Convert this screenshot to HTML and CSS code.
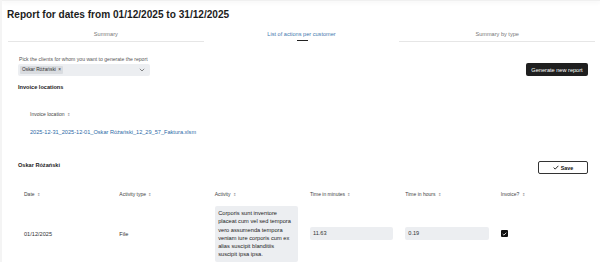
FILE: index.html
```html
<!DOCTYPE html>
<html lang="en">
<head>
    <meta charset="UTF-8">
    <title>Report</title>
    <link rel="stylesheet" href="styles.css">
</head>
<body>
<div class="top-shadow"></div>

<div class="page">
    <h1 class="page-title">Report for dates from 01/12/2025 to 31/12/2025</h1>

    <div class="tabs">
        <div class="tab">Summary</div>
        <div class="tab active">List of actions per customer</div>
        <div class="tab">Summary by type</div>
    </div>

    <div class="content">
        <div class="client-row">
            <div class="client-picker">
                <label class="field-label">Pick the clients for whom you want to generate the report</label>
                <div class="select">
                    <span class="chip">Oskar Różański <span class="chip-x">×</span></span>
                    <svg class="chevron" width="6" height="4" viewBox="0 0 6 4">
                        <path d="M0.8 0.8 L3 3 L5.2 0.8" fill="none" stroke="#555" stroke-width="0.7"/>
                    </svg>
                </div>
            </div>
            <button class="btn-dark">Generate new report</button>
        </div>

        <h2 class="section-title">Invoice locations</h2>

        <table class="invoice-table">
            <thead>
            <tr>
                <th>Invoice location <span class="sort">⇕</span></th>
            </tr>
            </thead>
            <tbody>
            <tr>
                <td><a href="#">2025-12-31_2025-12-01_Oskar Różański_12_29_57_Faktura.xlsm</a></td>
            </tr>
            </tbody>
        </table>

        <div class="customer-head">
            <h2 class="section-title">Oskar Różański</h2>
            <button class="btn-outline">
                <svg width="6" height="5" viewBox="0 0 6 5">
                    <path d="M0.6 2.6 L2.2 4.1 L5.4 0.8" fill="none" stroke="#111" stroke-width="0.9"/>
                </svg>
                Save
            </button>
        </div>

        <table class="actions-table">
            <thead>
            <tr>
                <th>Date <span class="sort">⇕</span></th>
                <th>Activity type <span class="sort">⇕</span></th>
                <th>Activity <span class="sort">⇕</span></th>
                <th>Time in minutes <span class="sort">⇕</span></th>
                <th>Time in hours <span class="sort">⇕</span></th>
                <th>Invoice? <span class="sort">⇕</span></th>
            </tr>
            </thead>
            <tbody>
            <tr>
                <td>01/12/2025</td>
                <td>File</td>
                <td>
                    <div class="activity-text">Corporis sunt inventore<br>placeat cum vel sed tempora<br>vero assumenda tempora<br>veniam iure corporis cum ex<br>alias suscipit blanditiis<br>suscipit ipsa ipsa.</div>
                </td>
                <td><div class="input">11.63</div></td>
                <td><div class="input">0.19</div></td>
                <td>
                    <span class="checkbox">
                        <svg width="5" height="4" viewBox="0 0 5 4">
                            <path d="M0.7 2 L1.9 3.1 L4.3 0.8" fill="none" stroke="#fff" stroke-width="0.8"/>
                        </svg>
                    </span>
                </td>
            </tr>
            </tbody>
        </table>
    </div>
</div>
</body>
</html>
```

FILE: styles.css
```css
body {
    margin: 0;
    font-family: "Liberation Sans", Arial, sans-serif;
    color: #222;
    background-color: #fff;
    border-left: 2px solid #f4f4f4;
    min-height: 262px;
    box-sizing: border-box;
}

.top-shadow {
    height: 1px;
    background-color: #f0f0f0;
    box-shadow: 0 1px 4px rgba(0, 0, 0, 0.12);
}

.page {
    padding-top: 8px;
}

.page-title {
    margin: 0 0 0 5px;
    font-size: 10.1px;
    line-height: 12px;
    font-weight: bold;
    color: #1c1c1c;
}

/* Tabs */
.tabs {
    display: flex;
    margin: 7px 5px 0 6px;
}

.tab {
    flex: 1;
    text-align: center;
    font-size: 5.6px;
    line-height: 8px;
    padding: 2px 0 3px;
    color: #777;
    border-bottom: 1px solid #e6e6e6;
    position: relative;
}

.tab.active {
    color: #3f78ae;
    border-bottom-color: transparent;
}

.tab.active::after {
    content: "";
    position: absolute;
    left: 50%;
    bottom: 0;
    width: 11px;
    height: 1px;
    margin-left: -5px;
    background-color: #222;
}

.content {
    padding: 0 12px 0 16px;
}

/* Client picker */
.client-row {
    display: flex;
    justify-content: space-between;
    align-items: flex-end;
    margin-top: 14px;
}

.field-label {
    display: block;
    font-size: 5.1px;
    line-height: 6px;
    color: #555;
    margin-left: 1px;
    margin-bottom: 2px;
}

.select {
    display: flex;
    align-items: center;
    justify-content: space-between;
    width: 132px;
    height: 12px;
    padding: 0 5px 0 2px;
    box-sizing: border-box;
    background-color: #eceef1;
    border-radius: 2px;
}

.chip {
    font-size: 4.8px;
    line-height: 8px;
    padding: 0 2px;
    background-color: #d9dce0;
    border-radius: 1px;
    color: #333;
}

.chip-x {
    margin-left: 1px;
}

.btn-dark {
    font-family: inherit;
    font-size: 5.6px;
    height: 13px;
    width: 62px;
    padding: 0;
    border: none;
    border-radius: 2px;
    background-color: #1f1f1f;
    color: #fff;
}

.section-title {
    margin: 8px 0 0;
    font-size: 5.6px;
    line-height: 7px;
    font-weight: bold;
    color: #222;
}

/* Tables */
table {
    border-collapse: collapse;
}

th {
    font-weight: normal;
    text-align: left;
    font-size: 5px;
    color: #444;
}

.sort {
    font-size: 4px;
    color: #888;
    margin-left: 1px;
}

.invoice-table {
    margin: 16px 0 0 6px;
}

.invoice-table th {
    height: 14px;
    padding: 0 6px;
}

.invoice-table td {
    height: 21px;
    padding: 0 6px;
    font-size: 5.6px;
}

.invoice-table a {
    color: #2c6aa6;
    text-decoration: none;
}

.customer-head {
    display: flex;
    justify-content: space-between;
    align-items: flex-start;
    margin-top: 19px;
}

.customer-head .section-title {
    margin-top: 0.5px;
}

.btn-outline {
    display: flex;
    align-items: center;
    justify-content: center;
    gap: 2px;
    font-family: inherit;
    font-size: 5.4px;
    font-weight: bold;
    width: 50px;
    height: 13px;
    padding: 0;
    border: 1px solid #333;
    border-radius: 2px;
    background-color: #fff;
    color: #111;
}

.actions-table {
    width: 572px;
    margin-top: 10px;
    table-layout: fixed;
}

.actions-table th {
    height: 20px;
    padding: 0 6px;
}

.actions-table td {
    padding: 2px 6px;
    font-size: 5.6px;
    color: #333;
    vertical-align: middle;
}

.activity-text {
    background-color: #eceef1;
    border-radius: 2px;
    padding: 3px 3px 3px 3.5px;
    line-height: 8.3px;
    font-size: 5.7px;
    color: #222;
    white-space: nowrap;
}

.input {
    height: 13px;
    line-height: 13px;
    padding: 0 3px;
    background-color: #eceef1;
    border-radius: 2px;
    color: #333;
}

.checkbox {
    display: inline-flex;
    align-items: center;
    justify-content: center;
    width: 7px;
    height: 7px;
    border-radius: 1px;
    background-color: #111;
}
```
